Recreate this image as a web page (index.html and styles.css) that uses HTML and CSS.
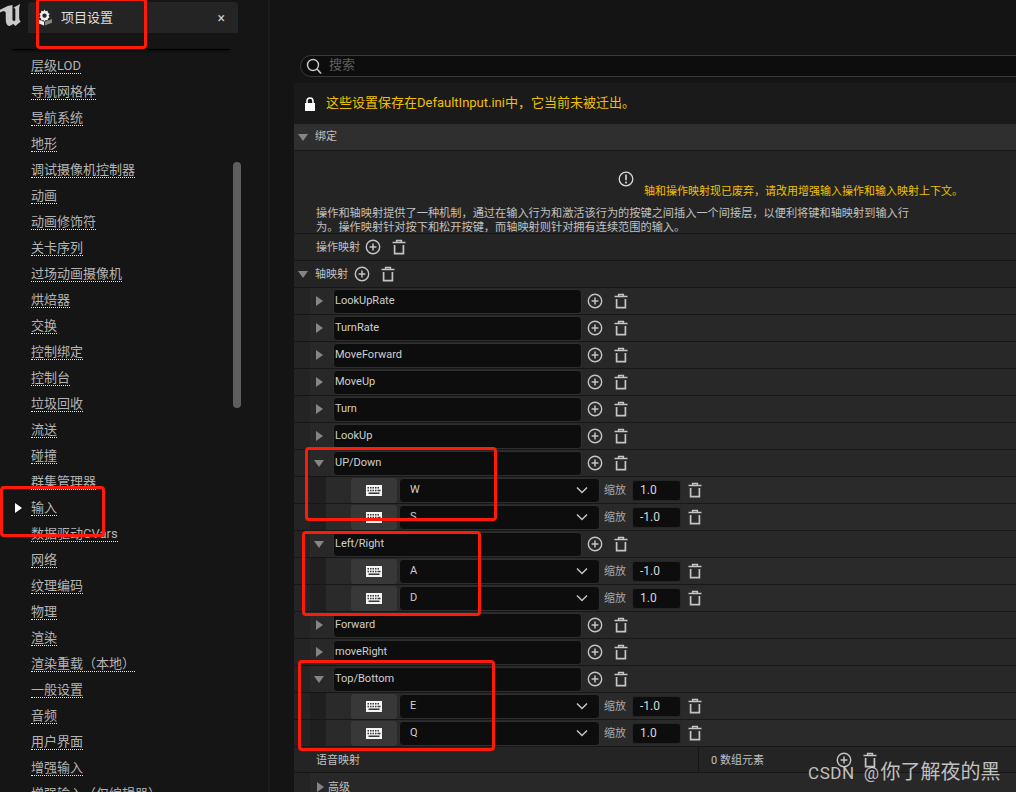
FILE: index.html
```html
<!DOCTYPE html>
<html lang="zh-CN">
<head>
    <meta charset="UTF-8">
    <title>项目设置</title>
    <link rel="stylesheet" href="styles.css">
</head>
<body>
    <svg class="icon-defs" width="0" height="0">
        <symbol id="i-plus" viewBox="0 0 16 16">
            <circle cx="8" cy="8" r="6.7" fill="none" stroke="currentColor" stroke-width="1.4"/>
            <path d="M8 4.6v6.8M4.6 8h6.8" stroke="currentColor" stroke-width="1.5"/>
        </symbol>
        <symbol id="i-trash" viewBox="0 0 16 16">
            <path d="M1.5 3.6h13M5.6 3.4V1.4h4.8v2" fill="none" stroke="currentColor" stroke-width="1.5"/>
            <path d="M3.6 6v8.6h8.8V6" fill="none" stroke="currentColor" stroke-width="1.7"/>
        </symbol>
        <symbol id="i-keys" viewBox="0 0 16 11">
            <path fill-rule="evenodd" fill="currentColor" d="M0 0h16v11H0zM1.5 2v1.5H3V2zM4 2v1.5h1.5V2zM6.5 2v1.5H8V2zM9 2v1.5h1.5V2zM11.5 2v1.5H13V2zM1.5 4.7v1.5H3V4.700zM4 4.700v1.500h1.500V4.700zM6.500 4.700v1.500H8V4.700zM9 4.700v1.500h1.500V4.700zM11.500 4.700v1.500H14.500V4.700zM2.500 7.500V9h11V7.500z"/>
        </symbol>
        <symbol id="i-chev" viewBox="0 0 12 8">
            <path d="M1 1.500l5 5 5-5" fill="none" stroke="currentColor" stroke-width="1.500"/>
        </symbol>
    </svg>

    <div class="app">
        <aside class="sidebar">
            <div class="topbar">
                <svg class="ue-logo" viewBox="0 0 24 26">
                    <path fill="#c9c9c9" d="M0 8l8-4 5-1v15c0 2 2 2 3 1V7l-2-1 7-4-1 4v10c0 3 1 4 2 4l-6 5-2-2-4 2c-4-1-4-5-4-9v-5C5 9 3 9 0 11z"/>
                </svg>
                <div class="tab">
                    <svg class="tab-icon" viewBox="0 0 16 17">
                        <path fill="#ececec" d="M8 0l1.200 1.800 2.100-.4.400 2.100 1.800 1.200-1.200 1.800 1.200 1.800-1.800 1.200-.4 2.100-2.100-.4L8 13l-1.200-1.800-2.100.4-.4-2.100-1.800-1.200 1.200-1.800-1.200-1.800 1.800-1.200.4-2.100 2.100.4z"/>
                        <circle cx="8" cy="6.500" r="2.300" fill="#242424"/>
                        <path fill="#f2f2f2" d="M0 10l7.500 3v4L0 14z"/>
                        <path fill="#858585" d="M16 10l-7.500 3v4L16 14z"/>
                    </svg>
                    <span class="tab-title">项目设置</span>
                    <span class="tab-close">×</span>
                </div>
            </div>
            <div class="tab-shadow"></div>
            <ul class="nav-list">
                <li><span>层级LOD</span></li>
                <li><span>导航网格体</span></li>
                <li><span>导航系统</span></li>
                <li><span>地形</span></li>
                <li><span>调试摄像机控制器</span></li>
                <li><span>动画</span></li>
                <li><span>动画修饰符</span></li>
                <li><span>关卡序列</span></li>
                <li><span>过场动画摄像机</span></li>
                <li><span>烘焙器</span></li>
                <li><span>交换</span></li>
                <li><span>控制绑定</span></li>
                <li><span>控制台</span></li>
                <li><span>垃圾回收</span></li>
                <li><span>流送</span></li>
                <li><span>碰撞</span></li>
                <li><span>群集管理器</span></li>
                <li class="active"><span>输入</span></li>
                <li><span>数据驱动CVars</span></li>
                <li><span>网络</span></li>
                <li><span>纹理编码</span></li>
                <li><span>物理</span></li>
                <li><span>渲染</span></li>
                <li><span>渲染重载（本地）</span></li>
                <li><span>一般设置</span></li>
                <li><span>音频</span></li>
                <li><span>用户界面</span></li>
                <li><span>增强输入</span></li>
                <li><span>增强输入（仅编辑器）</span></li>
            </ul>
            <div class="nav-scroll"></div>
        </aside>

        <main class="main">
            <div class="search">
                <svg class="search-icon" viewBox="0 0 16 16">
                    <circle cx="7" cy="7" r="5.500" fill="none" stroke="#c8c8c8" stroke-width="1.400"/>
                    <path d="M11 11l4 4.500" stroke="#c8c8c8" stroke-width="1.600"/>
                </svg>
                <span class="search-text">搜索</span>
            </div>
            <div class="lock-band">
                <svg class="lock-icon" viewBox="0 0 12 14">
                    <path d="M3 6V4a3 3 0 0 1 6 0v2" fill="none" stroke="#fff" stroke-width="1.600"/>
                    <path d="M1 6h10v8H1z" fill="#fff"/>
                </svg>
                <span class="lock-text">这些设置保存在DefaultInput.ini中，它当前未被迁出。</span>
            </div>
            <div class="section-head">
                <i class="tri-down"></i><span>绑定</span>
            </div>
            <div class="notice">
                <div class="notice-warn">
                    <svg class="warn-icon" viewBox="0 0 16 16">
                        <circle cx="8" cy="8" r="6.800" fill="none" stroke="#d8d8d8" stroke-width="1.300"/>
                        <path d="M8 3.600v5.600M8 10.600v1.800" stroke="#d8d8d8" stroke-width="1.600"/>
                    </svg>
                    <span>轴和操作映射现已废弃，请改用增强输入操作和输入映射上下文。</span>
                </div>
                <p>操作和轴映射提供了一种机制，通过在输入行为和激活该行为的按键之间插入一个间接层，以便利将键和轴映射到输入行<br>为。操作映射针对按下和松开按键，而轴映射则针对拥有连续范围的输入。</p>
            </div>
            <div class="row row-top">
                <span class="row-label">操作映射</span>
                <svg class="btn-icon"><use href="#i-plus"/></svg>
                <svg class="btn-icon"><use href="#i-trash"/></svg>
            </div>
            <div class="row row-group">
                <i class="tri-down"></i><span class="row-label">轴映射</span>
                <svg class="btn-icon"><use href="#i-plus"/></svg>
                <svg class="btn-icon"><use href="#i-trash"/></svg>
            </div>

            <div class="row row-axis"><i class="tri-right"></i><div class="field">LookUpRate</div><svg class="btn-icon"><use href="#i-plus"/></svg><svg class="btn-icon"><use href="#i-trash"/></svg></div>
            <div class="row row-axis"><i class="tri-right"></i><div class="field">TurnRate</div><svg class="btn-icon"><use href="#i-plus"/></svg><svg class="btn-icon"><use href="#i-trash"/></svg></div>
            <div class="row row-axis"><i class="tri-right"></i><div class="field">MoveForward</div><svg class="btn-icon"><use href="#i-plus"/></svg><svg class="btn-icon"><use href="#i-trash"/></svg></div>
            <div class="row row-axis"><i class="tri-right"></i><div class="field">MoveUp</div><svg class="btn-icon"><use href="#i-plus"/></svg><svg class="btn-icon"><use href="#i-trash"/></svg></div>
            <div class="row row-axis"><i class="tri-right"></i><div class="field">Turn</div><svg class="btn-icon"><use href="#i-plus"/></svg><svg class="btn-icon"><use href="#i-trash"/></svg></div>
            <div class="row row-axis"><i class="tri-right"></i><div class="field">LookUp</div><svg class="btn-icon"><use href="#i-plus"/></svg><svg class="btn-icon"><use href="#i-trash"/></svg></div>

            <div class="row row-axis"><i class="tri-down"></i><div class="field">UP/Down</div><svg class="btn-icon"><use href="#i-plus"/></svg><svg class="btn-icon"><use href="#i-trash"/></svg></div>
            <div class="row row-key"><div class="key-btn"><svg class="keys-icon"><use href="#i-keys"/></svg></div><div class="key-select"><span>W</span><svg class="chev"><use href="#i-chev"/></svg></div><span class="scale-label">缩放</span><div class="scale-input">1.0</div><svg class="btn-icon"><use href="#i-trash"/></svg></div>
            <div class="row row-key"><div class="key-btn"><svg class="keys-icon"><use href="#i-keys"/></svg></div><div class="key-select"><span>S</span><svg class="chev"><use href="#i-chev"/></svg></div><span class="scale-label">缩放</span><div class="scale-input">-1.0</div><svg class="btn-icon"><use href="#i-trash"/></svg></div>

            <div class="row row-axis"><i class="tri-down"></i><div class="field">Left/Right</div><svg class="btn-icon"><use href="#i-plus"/></svg><svg class="btn-icon"><use href="#i-trash"/></svg></div>
            <div class="row row-key"><div class="key-btn"><svg class="keys-icon"><use href="#i-keys"/></svg></div><div class="key-select"><span>A</span><svg class="chev"><use href="#i-chev"/></svg></div><span class="scale-label">缩放</span><div class="scale-input">-1.0</div><svg class="btn-icon"><use href="#i-trash"/></svg></div>
            <div class="row row-key"><div class="key-btn"><svg class="keys-icon"><use href="#i-keys"/></svg></div><div class="key-select"><span>D</span><svg class="chev"><use href="#i-chev"/></svg></div><span class="scale-label">缩放</span><div class="scale-input">1.0</div><svg class="btn-icon"><use href="#i-trash"/></svg></div>

            <div class="row row-axis"><i class="tri-right"></i><div class="field">Forward</div><svg class="btn-icon"><use href="#i-plus"/></svg><svg class="btn-icon"><use href="#i-trash"/></svg></div>
            <div class="row row-axis"><i class="tri-right"></i><div class="field">moveRight</div><svg class="btn-icon"><use href="#i-plus"/></svg><svg class="btn-icon"><use href="#i-trash"/></svg></div>

            <div class="row row-axis"><i class="tri-down"></i><div class="field">Top/Bottom</div><svg class="btn-icon"><use href="#i-plus"/></svg><svg class="btn-icon"><use href="#i-trash"/></svg></div>
            <div class="row row-key"><div class="key-btn"><svg class="keys-icon"><use href="#i-keys"/></svg></div><div class="key-select"><span>E</span><svg class="chev"><use href="#i-chev"/></svg></div><span class="scale-label">缩放</span><div class="scale-input">-1.0</div><svg class="btn-icon"><use href="#i-trash"/></svg></div>
            <div class="row row-key"><div class="key-btn"><svg class="keys-icon"><use href="#i-keys"/></svg></div><div class="key-select"><span>Q</span><svg class="chev"><use href="#i-chev"/></svg></div><span class="scale-label">缩放</span><div class="scale-input">1.0</div><svg class="btn-icon"><use href="#i-trash"/></svg></div>

            <div class="row row-voice">
                <span class="voice-name">语音映射</span>
                <div class="voice-value">
                    <span>0 数组元素</span>
                    <svg class="btn-icon"><use href="#i-plus"/></svg>
                    <svg class="btn-icon"><use href="#i-trash"/></svg>
                </div>
            </div>
            <div class="row row-advanced"><i class="tri-right"></i><span class="row-label">高级</span></div>
        </main>

        <!-- red boxes drawn over the shot -->
        <div class="mark mark-tab"></div>
        <div class="mark mark-input"></div>
        <div class="mark mark-updown"></div>
        <div class="mark mark-leftright"></div>
        <div class="mark mark-topbottom"></div>
        <div class="watermark"><span class="wm-latin">CSDN @</span>你了解夜的黑</div>
    </div>
</body>
</html>
```

FILE: styles.css
```css
:root {
    --panel: #242424;
    --panel-head: #2f2f2f;
    --line: #171717;
    --well: #0d0d0d;
    --well-line: #2e2e2e;
    --text: #c0c0c0;
    --yellow: #f0c000;
    --mark: #ff1a0a;
}

* {
    margin: 0;
    padding: 0;
    box-sizing: border-box;
}

body {
    background: #141414;
    color: var(--text);
    font-family: Roboto, "Noto Sans CJK SC", sans-serif;
    font-size: 11px;
}

.icon-defs {
    position: absolute;
}

.app {
    position: relative;
    display: flex;
    width: 1016px;
    height: 792px;
    overflow: hidden;
}

/* left column */
.sidebar {
    position: relative;
    width: 270px;
    flex-shrink: 0;
    background: #151515;
    border-right: 2px solid #1b1b1b;
}

.topbar {
    display: flex;
    height: 49px;
    padding-top: 2px;
}

.ue-logo {
    width: 23px;
    height: 25px;
    margin-right: 5px;
}

.tab {
    display: flex;
    align-items: center;
    width: 210px;
    height: 31px;
    padding: 0 13px 0 9px;
    background: #242424;
    border-radius: 4px 4px 0 0;
}

.tab-icon {
    width: 15px;
    height: 17px;
    margin-right: 9px;
}

.tab-title {
    flex: 1;
    padding-bottom: 2px;
    font-size: 13px;
    color: #dedede;
}

.tab-close {
    font-size: 14px;
    color: #c8c8c8;
}

.tab-shadow {
    width: 218px;
    height: 1px;
    margin-left: 12px;
    background: #000;
    box-shadow: 0 1px 3px #000;
}

.nav-list {
    list-style: none;
    margin-top: 3px;
    padding-left: 31px;
}

.nav-list li {
    position: relative;
    height: 26px;
    padding-top: 5px;
    font-size: 13px;
}

.nav-list li span {
    display: inline-block;
    height: 16px;
    line-height: 15px;
    color: #b4b4b4;
    border-bottom: 1px dotted #e6e6e6;
}

.nav-list .active::before {
    content: "";
    position: absolute;
    left: -16px;
    top: 8px;
    border-left: 7px solid #fff;
    border-top: 5px solid transparent;
    border-bottom: 5px solid transparent;
}

.nav-scroll {
    position: absolute;
    left: 233px;
    top: 162px;
    width: 8px;
    height: 246px;
    background: #5e5e5e;
    border-radius: 4px;
}

/* right column */
.main {
    flex: 1;
    min-width: 0;
    padding: 55px 0 0 24px;
}

.search {
    display: flex;
    align-items: center;
    height: 22px;
    margin: 0 -2px 6px 6px;
    padding-left: 5px;
    background: var(--well);
    border: 1px solid #3a3a3a;
    border-radius: 11px 0 0 11px;
    font-size: 13px;
    color: #5e5e5e;
}

.search-text {
    padding-bottom: 5px;
}

.search-icon {
    width: 16px;
    height: 16px;
    margin-right: 7px;
}

.lock-band {
    display: flex;
    align-items: center;
    height: 41px;
    padding-left: 10px;
    background: #1a1a1a;
    font-size: 13px;
    color: var(--yellow);
}

.lock-text {
    padding-bottom: 4px;
}

.lock-icon {
    width: 12px;
    height: 14px;
    margin-right: 10px;
}

.section-head {
    display: flex;
    align-items: center;
    height: 27px;
    padding-left: 4px;
    background: var(--panel-head);
    border-bottom: 1px solid var(--line);
}

.section-head span {
    margin-left: 7px;
    padding-bottom: 4px;
}

.notice {
    height: 82px;
    padding: 19px 0 0 22px;
    background: var(--panel);
}

.notice-warn {
    display: flex;
    align-items: flex-end;
    height: 28px;
    margin-left: 302px;
    color: var(--yellow);
}

.notice-warn span {
    line-height: 13px;
}

.warn-icon {
    width: 16px;
    height: 16px;
    margin: 0 10px 11px 0;
}

.notice p {
    margin-top: 9px;
    line-height: 14px;
    font-size: 11.2px;
}

.row {
    display: flex;
    align-items: center;
    height: 27px;
    background: var(--panel);
    border-top: 1px solid var(--line);
}

.row-top {
    padding-left: 22px;
}

.row-label {
    margin-right: 5px;
    padding-bottom: 2px;
}

.row-group {
    padding-left: 4px;
}

.row-group .row-label {
    margin-left: 7px;
    margin-right: 6px;
}

.row-axis {
    padding-left: 22px;
    background: linear-gradient(90deg, var(--panel) 16px, #282828 16px);
}

.tri-right,
.tri-down {
    display: block;
    width: 0;
    height: 0;
    flex-shrink: 0;
}

.tri-right {
    border-left: 7px solid #858585;
    border-top: 5px solid transparent;
    border-bottom: 5px solid transparent;
}

.tri-down {
    border-top: 7px solid #858585;
    border-left: 5.500px solid transparent;
    border-right: 5.500px solid transparent;
}

.row-axis .tri-right {
    margin-right: 10px;
}

.row-axis .tri-down {
    margin: 0 9px 0 -2px;
}

.field {
    width: 249px;
    height: 25px;
    margin-right: 5px;
    padding-left: 1px;
    line-height: 21px;
    background: var(--well);
    border: 1px solid var(--well-line);
    border-radius: 4px;
    color: #cfcfcf;
}

.btn-icon {
    width: 16px;
    height: 16px;
    margin-right: 10px;
    color: #c4c4c4;
}

.row-key {
    padding-left: 57px;
    background: linear-gradient(90deg, var(--panel) 16px, #1f1f1f 16px, #1f1f1f 32px, #2a2a2a 32px);
}

.key-btn {
    display: flex;
    align-items: center;
    justify-content: center;
    width: 46px;
    height: 25px;
    margin-right: 2px;
    background: #383838;
    border-radius: 3px;
}

.keys-icon {
    width: 16px;
    height: 11px;
    color: #f4f4f4;
}

.key-select {
    display: flex;
    align-items: center;
    justify-content: space-between;
    width: 201px;
    height: 25px;
    margin-right: 4px;
    padding: 0 11px 0 10px;
    background: var(--well);
    border: 1px solid var(--well-line);
    border-radius: 4px;
    color: #cfcfcf;
}

.key-select span {
    padding-bottom: 2px;
}

.chev {
    width: 12px;
    height: 8px;
    color: #c4c4c4;
}

.scale-label {
    width: 28px;
    padding-bottom: 2px;
    color: #a8a8a8;
}

.scale-input {
    width: 49px;
    height: 21px;
    margin-right: 6px;
    padding-left: 7px;
    line-height: 19px;
    background: var(--well);
    border: 1px solid #262626;
    border-radius: 3px;
    font-size: 12px;
    color: #d8d8d8;
}

.row-voice {
    padding-left: 22px;
    border-bottom: 1px solid var(--line);
}

.voice-name {
    width: 382px;
    padding-bottom: 2px;
}

.voice-value {
    display: flex;
    align-items: center;
    height: 100%;
    padding-left: 12px;
    border-left: 1px solid var(--line);
}

.voice-value span {
    width: 125px;
    padding-bottom: 2px;
}

.row-advanced {
    padding-left: 23px;
    border-top: 0;
    background: linear-gradient(90deg, var(--panel) 16px, #282828 16px);
}

.row-advanced .row-label {
    margin-left: 4px;
}

/* annotations drawn over the screenshot */
.mark {
    position: absolute;
    border: 3px solid var(--mark);
    border-radius: 4px;
}

.mark-tab {
    left: 36px;
    top: -2px;
    width: 111px;
    height: 51px;
}

.mark-input {
    left: 0;
    top: 486px;
    width: 105px;
    height: 51px;
}

.mark-updown {
    left: 305px;
    top: 447px;
    width: 192px;
    height: 74px;
}

.mark-leftright {
    left: 302px;
    top: 531px;
    width: 179px;
    height: 85px;
}

.mark-topbottom {
    left: 298px;
    top: 660px;
    width: 197px;
    height: 91px;
}

.watermark {
    position: absolute;
    left: 808px;
    top: 758px;
    font-size: 20px;
    line-height: 28px;
    color: rgba(255, 255, 255, 0.72);
}

.wm-latin {
    font-size: 17px;
    letter-spacing: 0.6px;
    word-spacing: 4px;
    margin-right: 1px;
}
```
